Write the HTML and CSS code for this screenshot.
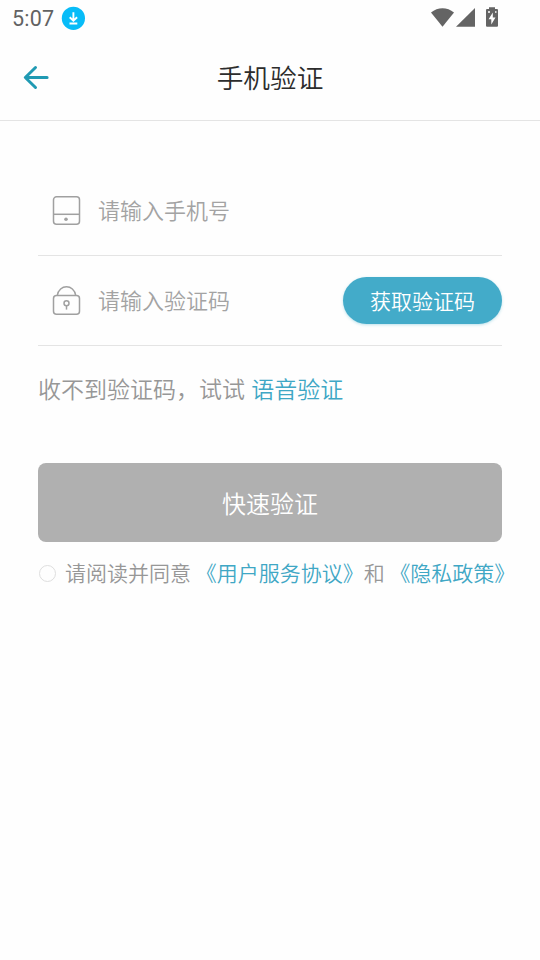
FILE: index.html
```html
<!DOCTYPE html>
<html lang="zh-CN">
<head>
<meta charset="utf-8">
<title>手机验证</title>
<link rel="stylesheet" href="styles.css">
</head>
<body>
<header class="status">
  <span class="clock">5:07</span>
  <svg class="download" width="24" height="24" viewBox="0 0 24 24"><circle cx="12.400" cy="12.300" r="11.600" fill="#08bcf8"/><path d="M12.400 6.300v8M8.700 11.200l3.700 3.500 3.700-3.500M8.500 17.500h7.800" fill="none" stroke="#fff" stroke-width="1.900"/></svg>
  <svg class="signals" width="70" height="24" viewBox="0 0 70 24" fill="#646464"><path d="M1 6.400C7.800.7 17.200.7 24 6.400L12.500 20.800z"/><path d="M26 20.800L45 2v18.800z"/><path d="M59 1.200h6v1.800h2q1 0 1 1v15.800q0 1-1 1H57q-1 0-1-1V4q0-1 1-1h2z"/><path d="M62.800 6.500l-4.200 6.800h2.700v5.200l4.200-7h-2.700zM58 5.200h2v1.500h-2zM65 5.200h1.500v1.500H65z" fill="#fff"/></svg>
</header>
<nav class="bar">
  <svg class="back" width="28" height="28" viewBox="0 0 28 28"><path d="M13.500 4.500L3.300 14.500l10.200 10M3.500 14.500h21.600" fill="none" stroke="#209ab3" stroke-width="3" stroke-linecap="round" stroke-linejoin="round"/></svg>
  <h1 class="title">手机验证</h1>
</nav>
<main class="form">
  <div class="row">
    <svg class="icon" width="30" height="32" viewBox="0 0 30 32" fill="none" stroke="#a0a0a0" stroke-width="1.500"><rect x="2.500" y="1.800" width="26" height="27.500" rx="3"/><path d="M2.500 19.300h26"/><circle cx="15" cy="24.300" r="1.800" fill="#a0a0a0" stroke="none"/></svg>
    <span class="placeholder">请输入手机号</span>
  </div>
  <div class="row">
    <svg class="icon" width="30" height="32" viewBox="0 0 30 32" fill="none" stroke="#a0a0a0" stroke-width="1.500"><rect x="2.500" y="10.500" width="26" height="18.800" rx="3"/><path d="M6.300 10.500C7.900-1.100 23.100-1.100 24.700 10.500"/><circle cx="15.500" cy="18.300" r="2.500"/><path d="M15.500 20.800v3.800"/></svg>
    <span class="placeholder">请输入验证码</span>
    <button class="code">获取验证码</button>
  </div>
  <p class="voice">收不到验证码，试试 <a class="link">语音验证</a></p>
  <button class="submit">快速验证</button>
  <div class="agree"><i class="radio"></i><span class="terms">请阅读并同意 <a class="link">《用户服务协议》</a>和 <a class="link">《隐私政策》</a></span></div>
</main>
</body>
</html>
```
FILE: styles.css
```css
* {
  box-sizing: border-box;
}
body {
  margin: 0;
  min-height: 960px;
  background: #fefefe;
  font-family: "Noto Sans CJK SC", sans-serif;
  font-weight: 350;
  color: #979797;
}
svg {
  display: block;
  flex: none;
}
.status {
  display: flex;
  height: 36px;
  padding: 6px 40px 0 12px;
}
.clock {
  width: 49px;
  font: 400 21.5px/26px Roboto, sans-serif;
  letter-spacing: 0.2px;
  color: #626262;
}
.signals {
  margin-left: auto;
}
.bar {
  display: flex;
  align-items: center;
  height: 85px;
  padding: 0 50px 2px 22px;
  border-bottom: 1px solid #e4e4e4;
}
.title {
  flex: 1;
  margin: 0;
  text-align: center;
  font-size: 26.7px;
  line-height: 40px;
  font-weight: 350;
  color: #2c2c2c;
}
.form {
  padding: 45px 38px 0;
}
.row {
  display: flex;
  align-items: center;
  height: 90px;
  padding-left: 13px;
  border-bottom: 1px solid #e4e4e4;
}
.placeholder {
  margin: 0 0 4px 17px;
  font-size: 22px;
  line-height: 32px;
  color: #a3a3a3;
}
button {
  display: block;
  padding: 0;
  border: 0;
  font-family: inherit;
  font-weight: inherit;
  color: #fff;
}
.code {
  width: 159px;
  height: 47px;
  margin-left: auto;
  border-radius: 24px;
  background: #43abc9;
  box-shadow: 0 1px 3px rgba(67, 171, 201, .35);
  font-size: 21px;
  line-height: 47px;
}
.voice {
  margin: 25px 0 0;
  height: 35px;
  font-size: 23px;
  line-height: 34px;
  white-space: nowrap;
}
.voice .link {
  margin-left: 1px;
}
.link {
  color: #3fa7c5;
}
.submit {
  width: 100%;
  height: 79px;
  margin-top: 57px;
  border-radius: 8px;
  background: #b0b0b0;
  font-size: 24px;
  line-height: 79px;
}
.agree {
  display: flex;
  align-items: center;
  height: 32px;
  margin-top: 15px;
  font-size: 21px;
  line-height: 32px;
  white-space: nowrap;
}
.terms {
  margin-bottom: 3px;
}
.radio {
  flex: none;
  width: 17px;
  height: 17px;
  margin: 1px 9px 0 1px;
  border: 1px solid #dedede;
  border-radius: 50%;
}
```
